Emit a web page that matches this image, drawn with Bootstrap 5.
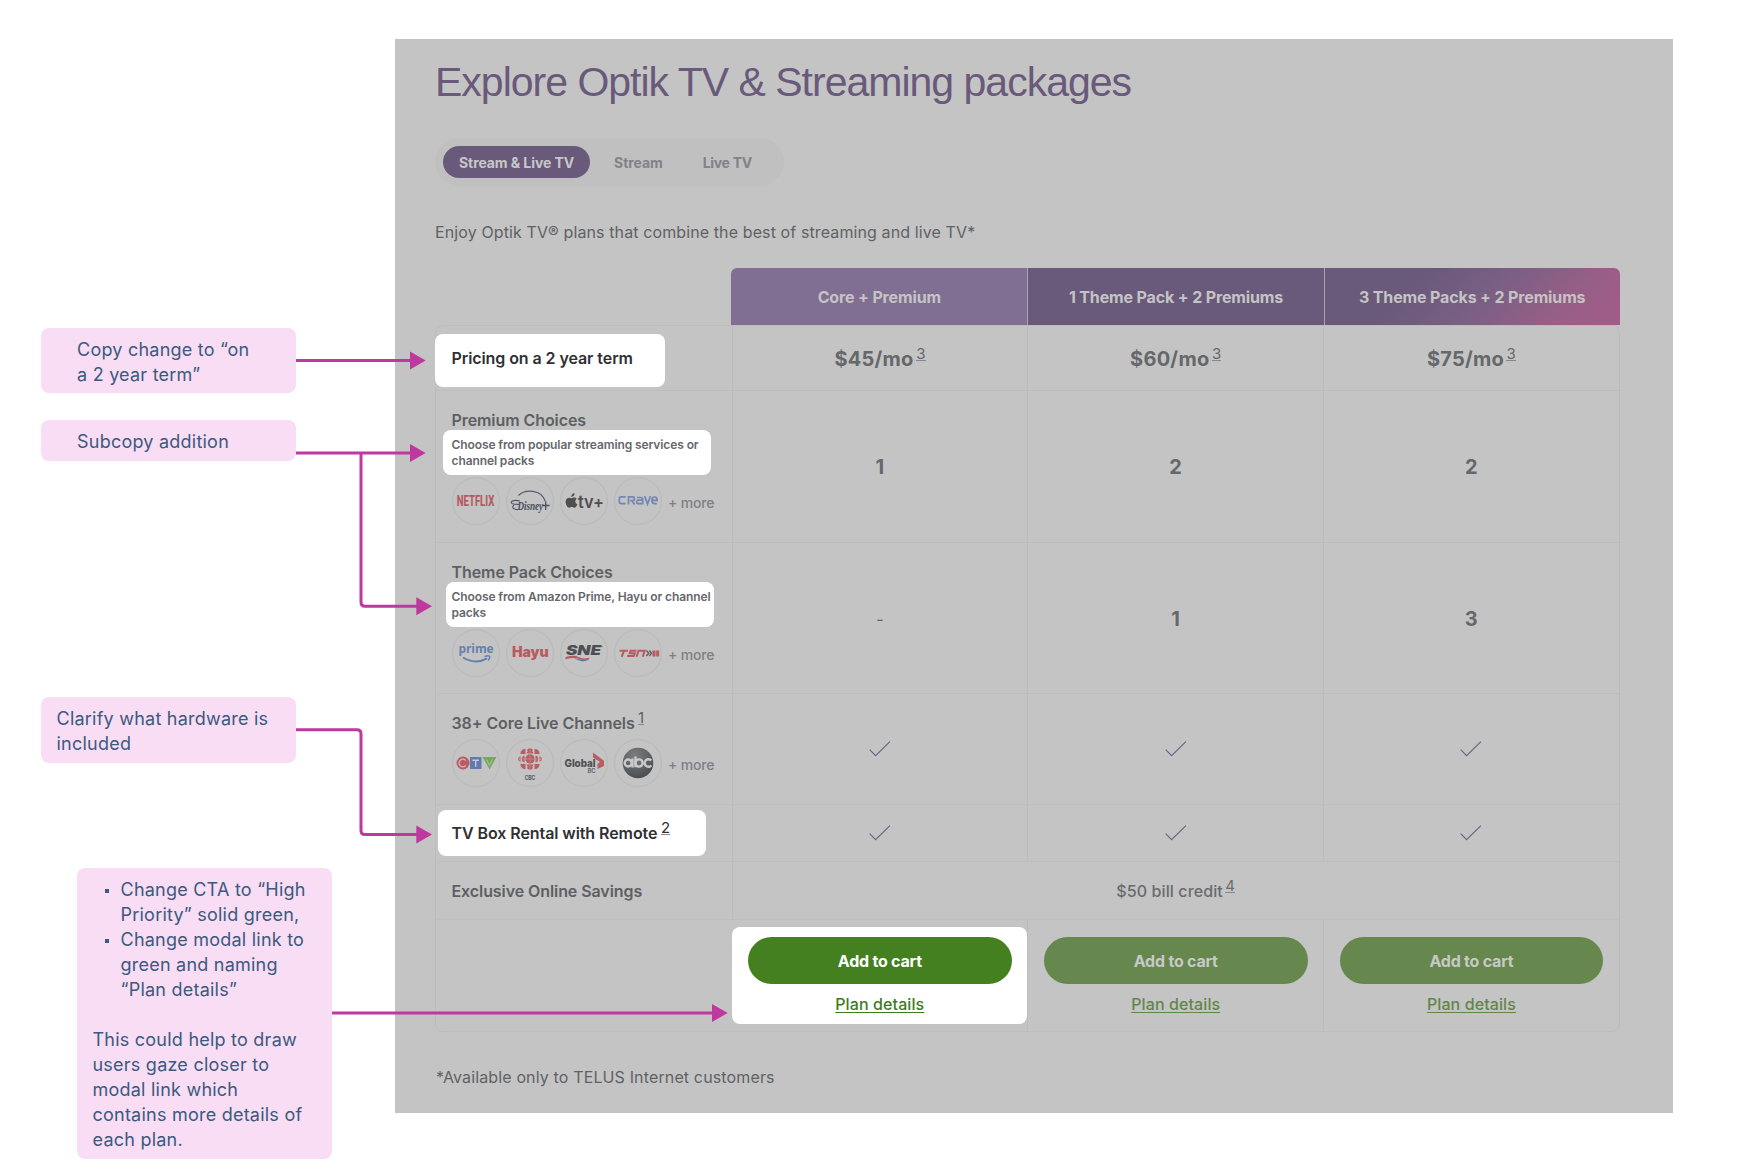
<!DOCTYPE html>
<html lang="en">
<head>
<meta charset="utf-8">
<meta name="viewport" content="width=device-width, initial-scale=1">
<title>Optik TV packages review</title>
<link href="https://cdn.jsdelivr.net/npm/bootstrap@5.3.0/dist/css/bootstrap.min.css" rel="stylesheet">
<style>
  body { background:#fff; font-family:Inter,"Liberation Sans",sans-serif; color:#616467; }
  .board { width:1744px; height:1176px; overflow:hidden; padding:38.5px 0 0 394.5px; }
  .screen { width:1278.3px; height:1074.5px; background:#c4c4c4; padding:18px 53px 0 40.5px; }
  .screen h1 { font:400 41px/50px "Liberation Sans",sans-serif; letter-spacing:-1px; color:#69597a; white-space:nowrap; }
  .tabs { margin-top:31.5px; height:48px; width:348.5px; padding:8px; gap:8px; border-radius:24px; background:#c0c0c0; }
  .tabs .nav-link { font-size:14px; line-height:32px; font-weight:700; padding:1px 16px 0; height:32px; color:#808287; border-radius:16px; letter-spacing:-.08px; }
  .tabs .nav-link.active { background:#69597a; color:#c8c8c8; }
  .tabs .nav-link:last-child { letter-spacing:-.3px; }
  .copy { font-weight:400; font-size:16px; line-height:24px; color:#5f6265; letter-spacing:.11px; }
  .intro { margin-top:34px; }
  .grid4 { display:grid; grid-template-columns:repeat(4,minmax(0,1fr)); }
  .heads { margin-top:24px; height:57px; }
  .heads > div { font-size:16px; font-weight:700; letter-spacing:-.14px; color:#c4c4c4; border-left:1px solid #a9a5af; }
  .h1c { background:#806f93; border-radius:6px 0 0 0; border-left:0 !important; }
  .h2c { background:#69597a; }
  .h3c { background:linear-gradient(135deg,#69597a 30%,#785f83 52%,#965f87 78%,#a35b89); border-radius:0 6px 0 0; }
  .plans { border:1px solid #bdbdbd; border-radius:8px; height:707px; }
  .plans .grid4 { border-bottom:1px solid #bdbdbd; }
  .plans .grid4:last-child { border-bottom:0; }
  .plans .grid4 > div + div { border-left:1px solid #bdbdbd; }
  .lbl { padding-left:15.5px; font-size:16px; line-height:24px; font-weight:600; letter-spacing:-.08px; white-space:nowrap; color:#5d6063; }
  .r1{height:65px}.r2{height:152px}.r3{height:151px}.r4{height:110.5px}.r5{height:57.5px}.r6{height:58px}.r7{height:112px}
  .tall { padding-top:17px; }
  .spot { background:#fff; border-radius:8px; color:#2f3033; }
  .spot-price { width:230px; height:53px; margin-left:-16.5px; padding:0 0 4.5px 16.5px; }
  .spot-sub { width:268px; height:45.6px; margin:-2.5px 0 0 -8.5px; padding:7px 0 0 8.5px; font-size:12px; line-height:16.5px; font-weight:600; letter-spacing:-.1px; color:#66676c; }
  .spot-sub.shifted { margin-left:-5.6px; padding-left:5.6px; }
  .spot-box { width:268px; height:45.6px; margin:1px 0 0 -13.5px; padding-left:13.5px; }
  .logos { gap:6.1px; margin-top:2.2px; }
  .logos svg { width:48px; height:48px; flex:none; }
  .logos span { font-size:14px; font-weight:500; color:#7e7f86; letter-spacing:-.15px; padding-top:3.5px; }
  .ref { font-size:15px; font-weight:400; line-height:12px; align-self:center; margin:-9px 0 0 2.5px; border-bottom:1px solid #85878c; }
  .lbl .ref { margin-left:3.5px; }
  .amount { font-size:20px; font-weight:700; color:#65686a; letter-spacing:.25px; padding-top:1px; }
  .check { width:22px; height:16px; margin-top:1px; fill:none; stroke:#6f6384; stroke-width:1.2; }
  .wide { grid-column:2 / 5; font-weight:500; font-size:16px; color:#686b6e; letter-spacing:.1px; }
  .cta { padding:16.5px 15.5px 0; }
  .cta .btn { height:47.500px; line-height:47.500px; padding:1px 0 0; border:0; border-radius:24px; background:#66874d; color:#c8c8c8; font-size:16px; font-weight:700; letter-spacing:-.22px; line-height:46px; }
  .cta a { margin-top:7.500px; font-size:16px; line-height:24px; font-weight:500; color:#62864a; letter-spacing:.1px; text-decoration-thickness:1px; text-underline-offset:1.500px; }
  .spot-cta { background:#fff; border-radius:8px; margin:7px 0 8px .5px; padding-top:9.500px; border-left:0 !important; }
  .spot-cta .btn { background:#448020; color:#fff; }
  .spot-cta a { color:#3f7b1c; }
  .footnote { margin-top:33px; padding-left:1px; letter-spacing:.14px; }
  .note { position:absolute; background:#f9ddf4; border-radius:8px; color:#3a5a80; font-size:18px; line-height:25.050px; letter-spacing:.23px; white-space:nowrap; }
  .n1 { left:41px; top:328px; width:255px; height:65px; padding:9px 0 0 36px; }
  .n2 { left:41px; top:420px; width:255px; height:40.700px; padding:9px 0 0 36px; }
  .n3 { left:41px; top:697px; width:255px; height:65.600px; padding:9px 0 0 15.500px; }
  .n4 { left:77px; top:867.500px; width:255px; height:291px; padding:9.300px 0 0 15.500px; }
  .n4 ul { list-style:none; margin:0 0 25px; padding-left:28px; }
  .n4 li::before { content:""; float:left; width:4px; height:4px; margin:12.500px 0 0 -16px; background:#3a5a80; }
  .arrows { left:0; top:0; pointer-events:none; }
</style>
<script src="https://cdn.jsdelivr.net/npm/bootstrap@5.3.0/dist/js/bootstrap.bundle.min.js"></script>
</head>
<body>
<main class="board position-relative">
  <section class="screen">
    <h1 class="m-0">Explore Optik TV &amp; Streaming packages</h1>
    <nav class="tabs nav nav-pills flex-nowrap">
      <a class="nav-link active" href="#">Stream &amp; Live TV</a>
      <a class="nav-link" href="#">Stream</a>
      <a class="nav-link text-nowrap" href="#">Live TV</a>
    </nav>
    <p class="copy intro mb-0">Enjoy Optik TV® plans that combine the best of streaming and live TV*</p>

    <div class="heads grid4 text-center">
      <span></span>
      <div class="h1c d-flex align-items-center justify-content-center">Core + Premium</div>
      <div class="h2c d-flex align-items-center justify-content-center">1 Theme Pack + 2 Premiums</div>
      <div class="h3c d-flex align-items-center justify-content-center">3 Theme Packs + 2 Premiums</div>
    </div>

    <div class="plans">
      <div class="grid4 r1">
        <div class="lbl d-flex align-items-center"><div class="spot spot-price d-flex align-items-center mt-1">Pricing on a 2 year term</div></div>
        <div class="amount d-flex align-items-center justify-content-center">$45/mo<span class="ref">3</span></div>
        <div class="amount d-flex align-items-center justify-content-center">$60/mo<span class="ref">3</span></div>
        <div class="amount d-flex align-items-center justify-content-center">$75/mo<span class="ref">3</span></div>
      </div>

      <div class="grid4 r2">
        <div class="lbl tall">
          <div>Premium Choices</div>
          <div class="spot spot-sub">Choose from popular streaming services or<br>channel packs</div>
          <div class="logos d-flex align-items-center">
            <svg viewBox="0 0 48 48"><circle cx="24" cy="24" r="23.5" fill="none" stroke="#babbbb" stroke-width="1.3"/><text x="5" y="28.9" font-family="Roboto" font-weight="800" font-size="14" textLength="56" transform="translate(1.4 0) scale(.67 1)" lengthAdjust="spacingAndGlyphs" fill="#b75a60">NETFLIX</text></svg>
            <svg viewBox="0 0 48 48"><circle cx="24" cy="24" r="23.5" fill="none" stroke="#babbbb" stroke-width="1.3"/><path d="M12.500 18.500C19 12 35.500 12 39.300 24.500" fill="none" stroke="#55596a" stroke-width="1.100"/><path d="M14 24C7.500 22.300 3.500 24.500 6 26.500c2.500 1.300 5.500 1 7.500.8M8 28.300c-3 2.200 0 4.500 4 4.300" fill="none" stroke="#55596a" stroke-width="1.200"/><text x="11.500" y="32.800" font-family="Liberation Serif" font-style="italic" font-weight="700" font-size="11.500" textLength="25.500" lengthAdjust="spacingAndGlyphs" fill="#4d515f">Disney</text><path d="M36 28.500h7.500M39.700 24.500v8.500" stroke="#4d515f" stroke-width="1.300"/></svg>
            <svg viewBox="0 0 48 48"><circle cx="24" cy="24" r="23.5" fill="none" stroke="#babbbb" stroke-width="1.3"/><path d="M11.500 21.200c1.300 0 2-.9 3.300-.6 1 .2 1.700.7 2 1.200-2.300 1.500-1.700 4.500.6 5.400-.6 1.600-1.700 3.500-3 3.500-1 0-1.500-.6-2.600-.6s-1.600.6-2.500.6c-2 0-3.700-3.600-3.700-6 0-3.400 3.300-4.900 5.900-3.500z" fill="#4c4e50"/><path d="M11.300 20c-.1-2 1.400-3.700 3.200-3.900.3 2-1.300 3.900-3.200 3.900z" fill="#4c4e50"/><text x="18" y="30.800" font-family="Inter" font-weight="600" font-size="17" textLength="25.800" lengthAdjust="spacingAndGlyphs" fill="#4c4e50">tv+</text></svg>
            <svg viewBox="0 0 48 48"><circle cx="24" cy="24" r="23.5" fill="none" stroke="#babbbb" stroke-width="1.3"/><g fill="none" stroke="#7186b3" stroke-width="1.700"><path d="M11.700 19.800H7.500q-2.200 0-2.200 2.200v2.500q0 2.200 2.200 2.200h4.200M14.500 27.500V19.800h4q2 0 2 1.900t-2 1.900H16m2 0 2.500 3.900M23 20.500h3.500q2.200 0 2.200 2v4.200h-4q-2 0-2-1.800t2-1.700h4M30.600 19l2.900 8 2.900-8M38.200 23.400h5q0-3.400-2.600-3.400-2.700 0-2.700 3.300 0 3.400 2.700 3.400h2.200"/></g></svg>
            <span>+ more</span>
          </div>
        </div>
        <div class="amount d-flex align-items-center justify-content-center">1</div>
        <div class="amount d-flex align-items-center justify-content-center">2</div>
        <div class="amount d-flex align-items-center justify-content-center">2</div>
      </div>

      <div class="grid4 r3">
        <div class="lbl tall">
          <div>Theme Pack Choices</div>
          <div class="spot spot-sub shifted">Choose from Amazon Prime, Hayu or channel<br>packs</div>
          <div class="logos d-flex align-items-center">
            <svg viewBox="0 0 48 48"><circle cx="24" cy="24" r="23.5" fill="none" stroke="#babbbb" stroke-width="1.3"/><text x="6.500" y="24.300" font-family="Open Sans" font-weight="700" font-size="13" textLength="35" lengthAdjust="spacingAndGlyphs" fill="#6580b0">prime</text><path d="M11 28.500q12 7.500 24 .8" fill="none" stroke="#6580b0" stroke-width="2"/><path d="M32.500 27.500q5.500-1.500 5.300.3-.2 2-1.800 3.700" fill="none" stroke="#6580b0" stroke-width="1.400"/></svg>
            <svg viewBox="0 0 48 48"><circle cx="24" cy="24" r="23.5" fill="none" stroke="#babbbb" stroke-width="1.3"/><text x="6" y="28" font-family="Inter" font-weight="900" font-size="14" textLength="36.500" lengthAdjust="spacingAndGlyphs" fill="#b95a60">Hayu</text></svg>
            <svg viewBox="0 0 48 48"><circle cx="24" cy="24" r="23.5" fill="none" stroke="#babbbb" stroke-width="1.3"/><text x="6" y="26" font-family="Inter" font-style="italic" font-weight="900" font-size="13.500" textLength="35" lengthAdjust="spacingAndGlyphs" fill="#4d4f54">SNE</text><path d="M5.500 28q9-2.500 13 0t11 .8l-.8 2q-7 .5-11-1.200t-12.200.6z" fill="#b85a62"/><path d="M14 29.500l14 1.700-5.500 1.400-4-1.400z" fill="#5f78ab"/><path d="M41 17.500h2" stroke="#777" stroke-width=".8"/></svg>
            <svg viewBox="0 0 48 48"><circle cx="24" cy="24" r="23.5" fill="none" stroke="#babbbb" stroke-width="1.3"/><g fill="none" stroke="#b95a60" stroke-width="2"><path d="M5.500 21.800h8.500M10 21.800l-2.300 6M22.500 21.800h-6l-.8 2.500h5l-1 2.700h-6.500M22.500 27.700l2-5.900h6.200l-2 5.900"/></g><path d="M32.500 21.500l2.300 2.800-2.500 2.800M35.500 21.500l2 2.800-2.200 2.800" stroke="#6b6063" stroke-width="1.500" fill="none"/><path d="M38.500 21.500h3v6h-3zM42.200 21.500h3v6h-3z" fill="#b95a60"/></svg>
            <span>+ more</span>
          </div>
        </div>
        <div class="amount d-flex align-items-center justify-content-center fw-normal fs-6">-</div>
        <div class="amount d-flex align-items-center justify-content-center">1</div>
        <div class="amount d-flex align-items-center justify-content-center">3</div>
      </div>

      <div class="grid4 r4">
        <div class="lbl tall">
          <div class="d-flex">38+ Core Live Channels<span class="ref">1</span></div>
          <div class="logos d-flex align-items-center mt-1">
            <svg viewBox="0 0 48 48"><circle cx="24" cy="24" r="23.5" fill="none" stroke="#babbbb" stroke-width="1.3"/><circle cx="11" cy="24" r="6.500" fill="#b85d62"/><path d="M13.800 21.600a3.800 3.800 0 1 0 0 4.800" fill="none" stroke="#d2b4b5" stroke-width="1.300"/><path d="M18 18h11.500v12H18z" fill="#627bae"/><path d="M20.500 21.200h6.500M23.700 21.200v6.500" stroke="#c6cad2" stroke-width="1.400"/><path d="M30.500 18h14l-7 12.500z" fill="#79a75d"/><path d="M34.500 20.500l3 5.500 3-5.500" fill="none" stroke="#a5c197" stroke-width="1.100"/></svg>
            <svg viewBox="0 0 48 48"><circle cx="24" cy="24" r="23.5" fill="none" stroke="#babbbb" stroke-width="1.3"/><g fill="#b85d62"><circle cx="24" cy="20" r="4.700"/><path d="M20.500 14.500a3.600 3.600 0 0 1 7 0zM20.500 25.500a3.600 3.600 0 0 0 7 0zM18.500 16.500a3.600 3.600 0 0 0 0 7zM29.500 16.500a3.600 3.600 0 0 1 0 7z"/><path d="M21 11a3.500 3.500 0 0 1 6 0l-.8 1.500h-4.400zM21 29a3.500 3.500 0 0 0 6 0l-.8-1.500h-4.400zM14.500 17a3.500 3.500 0 0 0 0 6zM33.500 17a3.500 3.500 0 0 1 0 6zM13.400 17.500v5q-2.500-2.500 0-5zM34.600 17.500v5q2.500-2.500 0-5zM19.500 10v5h-5a4.500 4.500 0 0 1 5-5zM28.500 10v5h5a4.500 4.500 0 0 0-5-5zM19.500 30v-5h-5a4.500 4.500 0 0 0 5 5zM28.500 30v-5h5a4.500 4.500 0 0 1-5 5z"/></g><path d="M24 9v22M13 20h22" stroke="#c4a6a8" stroke-width=".5"/><text x="18.700" y="40.500" font-family="Inter" font-weight="700" font-size="5.800" textLength="10.500" lengthAdjust="spacingAndGlyphs" fill="#55585b">CBC</text></svg>
            <svg viewBox="0 0 48 48"><circle cx="24" cy="24" r="23.5" fill="none" stroke="#babbbb" stroke-width="1.3"/><text x="4.500" y="28.300" font-family="Inter" font-weight="800" font-size="10.800" textLength="31" lengthAdjust="spacingAndGlyphs" fill="#4e5053">Global</text><path d="M33 13.500l11 8.200v5.300l-6.500 3v-5.300l2.500-1.700-7-4.500z" fill="#b85d62"/><text x="27.500" y="34" font-family="Inter" font-weight="600" font-size="5.800" fill="#5a5c66">BC</text></svg>
            <svg viewBox="0 0 48 48"><circle cx="24" cy="24" r="23.5" fill="none" stroke="#babbbb" stroke-width="1.3"/><defs><radialGradient id="ball" cx=".4" cy=".25" r=".8"><stop offset="0" stop-color="#7b7e80"/><stop offset="1" stop-color="#494c4e"/></radialGradient></defs><circle cx="24" cy="24" r="15.300" fill="url(#ball)"/><g fill="none" stroke="#c9cbcc" stroke-width="2.400"><circle cx="14.200" cy="24" r="3.500"/><path d="M18.500 19.500v9M21.500 17.500v10.800"/><circle cx="25" cy="24" r="3.600"/><path d="M37.300 21.500a3.800 3.800 0 1 0 0 5"/></g></svg>
            <span>+ more</span>
          </div>
        </div>
        <div class="d-flex align-items-center justify-content-center"><svg class="check"><path d="M.7 8.700l5.900 6L20.900.6"/></svg></div>
        <div class="d-flex align-items-center justify-content-center"><svg class="check"><path d="M.7 8.700l5.900 6L20.900.6"/></svg></div>
        <div class="d-flex align-items-center justify-content-center"><svg class="check"><path d="M.7 8.700l5.900 6L20.900.6"/></svg></div>
      </div>

      <div class="grid4 r5">
        <div class="lbl d-flex align-items-center"><div class="spot spot-box d-flex align-items-center">TV Box Rental with Remote<span class="ref">2</span></div></div>
        <div class="d-flex align-items-center justify-content-center"><svg class="check"><path d="M.7 8.700l5.900 6L20.900.6"/></svg></div>
        <div class="d-flex align-items-center justify-content-center"><svg class="check"><path d="M.7 8.700l5.900 6L20.900.6"/></svg></div>
        <div class="d-flex align-items-center justify-content-center"><svg class="check"><path d="M.7 8.700l5.900 6L20.900.6"/></svg></div>
      </div>

      <div class="grid4 r6">
        <div class="lbl d-flex align-items-center">Exclusive Online Savings</div>
        <div class="wide d-flex align-items-center justify-content-center">$50 bill credit<span class="ref">4</span></div>
      </div>

      <div class="grid4 r7">
        <div></div>
        <div class="cta spot-cta d-flex flex-column"><button class="btn w-100">Add to cart</button><a class="align-self-center" href="#">Plan details</a></div>
        <div class="cta d-flex flex-column"><button class="btn w-100">Add to cart</button><a class="align-self-center" href="#">Plan details</a></div>
        <div class="cta d-flex flex-column"><button class="btn w-100">Add to cart</button><a class="align-self-center" href="#">Plan details</a></div>
      </div>
    </div>
    <p class="copy footnote mb-0">*Available only to TELUS Internet customers</p>
  </section>

  <!-- Review notes pinned over the board -->
  <aside class="note n1">Copy change to “on<br>a 2 year term”</aside>
  <aside class="note n2">Subcopy addition</aside>
  <aside class="note n3">Clarify what hardware is<br>included</aside>
  <aside class="note n4">
    <ul>
      <li>Change CTA to “High<br>Priority” solid green,</li>
      <li>Change modal link to<br>green and naming<br>“Plan details”</li>
    </ul>
    This could help to draw<br>users gaze closer to<br>modal link which<br>contains more details of<br>each plan.
  </aside>
  <svg class="arrows position-absolute" width="1744" height="1176" fill="none" stroke="#be38a0" stroke-width="3">
    <path d="M296 360.500H412M296 453H412M361 453V602q0 4.300 4 4.300H418M296 729.800H357q4 0 4 4V830.500q0 4 4 4H418M332 1013H714"/>
    <path fill="#be38a0" stroke="none" d="M410 351.500l15.700 9-15.700 9zM410 444l15.700 9-15.700 9zM416.300 597.300l15.700 9-15.700 9zM416.300 825.500l15.700 9-15.700 9zM712 1004l15.700 9-15.700 9z"/>
  </svg>
</main>
</body>
</html>
